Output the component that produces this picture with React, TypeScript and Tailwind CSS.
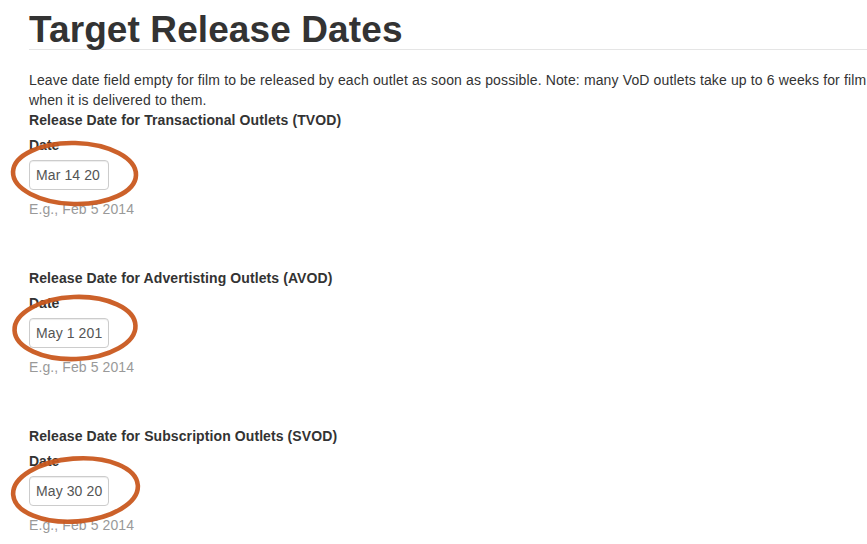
import React from "react";

type Section = {
  title: string;
  value: string;
  cx: number;
  cy: number;
  rx: number;
  ry: number;
  rot: number;
  gap: string;
};

const sections: Section[] = [
  { title: "Release Date for Transactional Outlets (TVOD)", value: "Mar 14 20", cx: 74.5, cy: 63.5, rx: 61.5, ry: 30.5, rot: 1.5, gap: "mt-0" },
  { title: "Release Date for Advertisting Outlets (AVOD)", value: "May 1 201", cx: 75, cy: 60, rx: 60.5, ry: 31, rot: -2.3, gap: "mt-[49px]" },
  { title: "Release Date for Subscription Outlets (SVOD)", value: "May 30 20", cx: 75.5, cy: 64, rx: 62.5, ry: 31.5, rot: -4.5, gap: "mt-[49px]" },
];

function Ellipse({ s }: { s: Section }) {
  return (
    <svg
      className="absolute left-0 top-0 pointer-events-none overflow-visible"
      width={160}
      height={130}
      viewBox="0 0 160 130"
    >
      <ellipse
        cx={s.cx}
        cy={s.cy}
        rx={s.rx}
        ry={s.ry}
        transform={`rotate(${s.rot} ${s.cx} ${s.cy})`}
        fill="none"
        stroke="#c9591f"
        strokeWidth={4.6}
        opacity={0.95}
      />
    </svg>
  );
}

export default function App() {
  return (
    <div className="w-[867px] h-[544px] overflow-hidden bg-white text-[#333] font-['Liberation_Sans',Arial,Helvetica,sans-serif]">
      <h1 className="ml-[29px] pt-[11px] text-[37px] leading-[38px] font-bold border-b border-[#e5e5e5] tracking-[0.1px]">
        Target Release Dates
      </h1>
      <p className="ml-[29px] mt-[20px] text-[14px] leading-[20px] tracking-[0.14px]">
        <span className="whitespace-nowrap">
          Leave date field empty for film to be released by each outlet as soon as possible. Note: many VoD outlets take up to 6 weeks for film
        </span>
        <br />
        when it is delivered to them.
      </p>
      {sections.map((s) => (
        <section key={s.title} className={`relative pl-[29px] text-[14px] leading-[20px] ${s.gap}`}>
          <div className="font-bold tracking-[0.09px]">{s.title}</div>
          <div className="mt-[5px] font-bold">Date</div>
          <div className="mt-[5px] w-[80px] h-[30px] border border-[#cccccc] rounded-[4px] px-[6px] leading-[28px] text-[#555] overflow-hidden whitespace-nowrap bg-white shadow-[inset_0_1px_1px_rgba(0,0,0,0.075)] tracking-[0.1px]">
            {s.value}
          </div>
          <div className="mt-[9px] text-[#999] tracking-[0.1px]">E.g., Feb 5 2014</div>
          <Ellipse s={s} />
        </section>
      ))}
    </div>
  );
}
